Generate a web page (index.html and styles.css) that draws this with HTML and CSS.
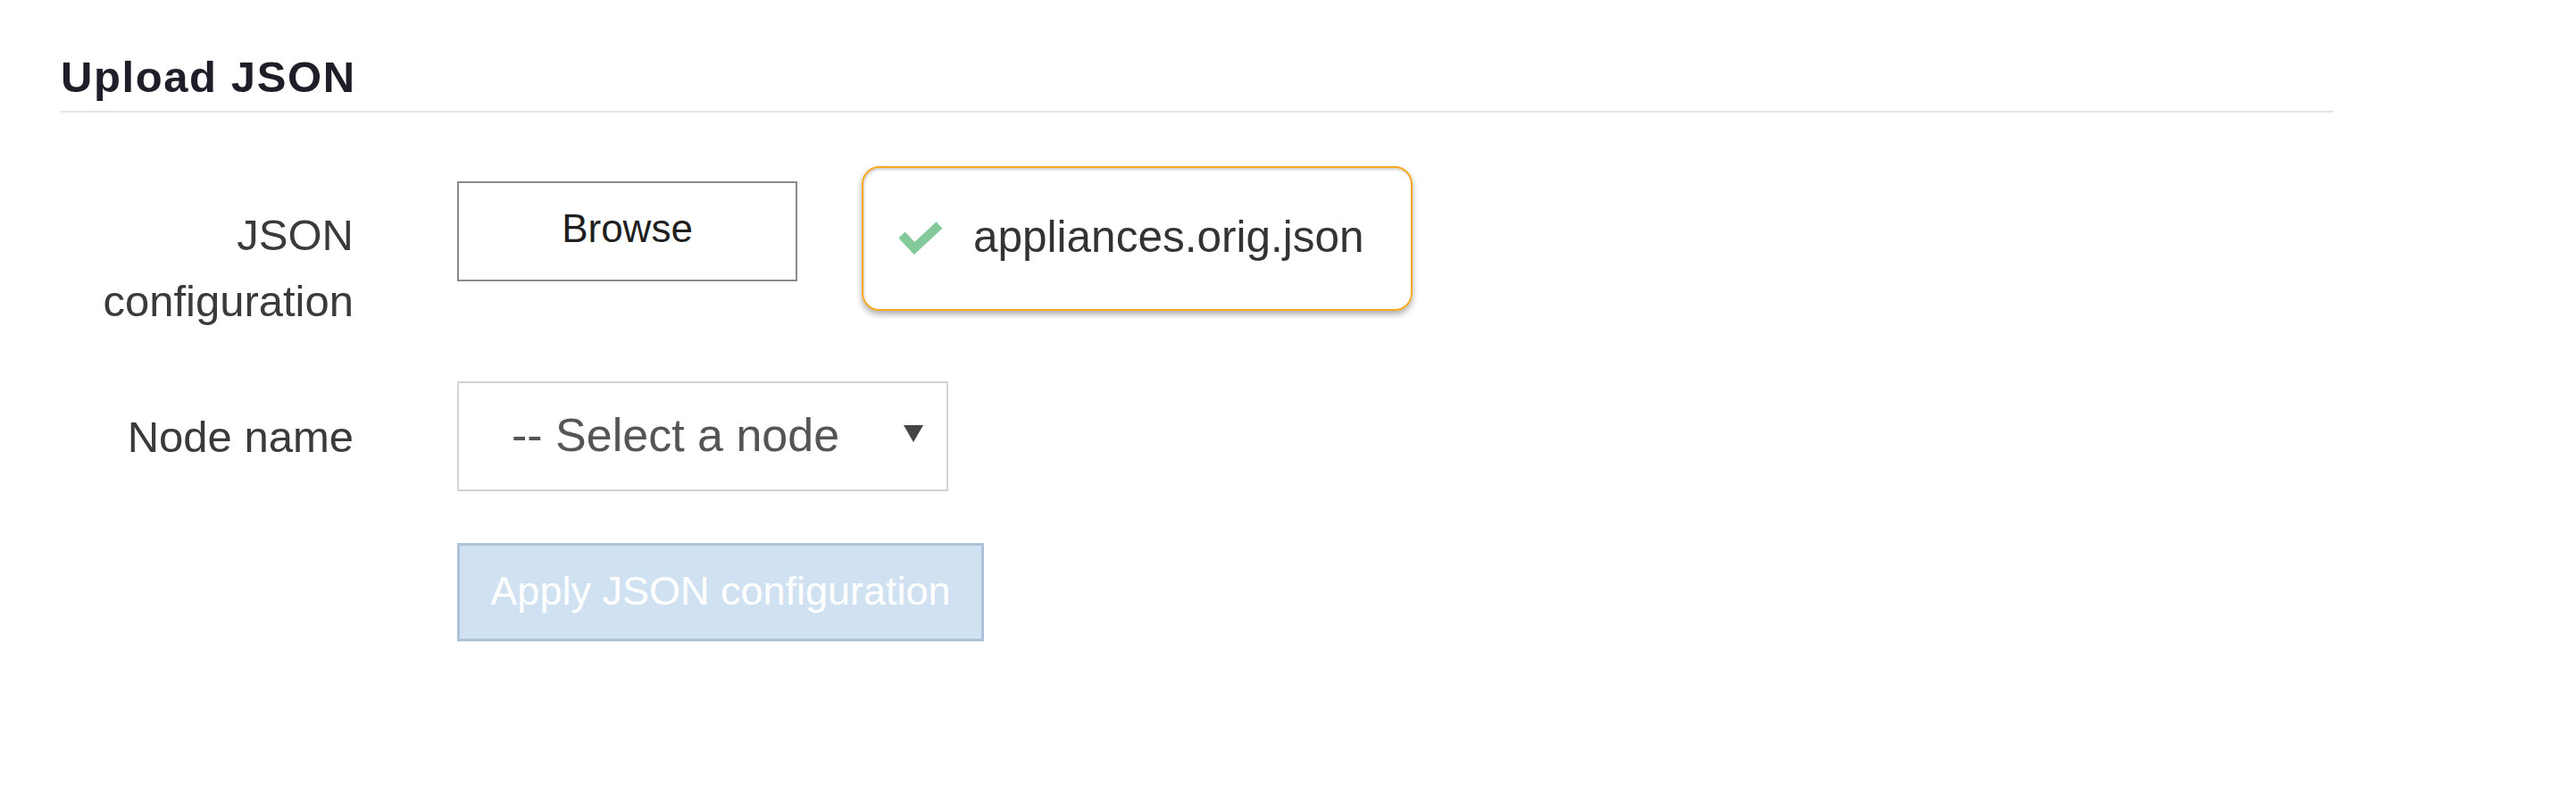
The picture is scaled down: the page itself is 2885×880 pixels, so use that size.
FILE: index.html
```html
<!DOCTYPE html>
<html lang="en">
<head>
<meta charset="utf-8">
<title>Upload JSON</title>
<link rel="stylesheet" href="styles.css">
</head>
<body>
<div class="page">
  <h2 class="section-title">Upload JSON</h2>
  <div class="form">
    <div class="row row-json">
      <label class="label label-json">JSON<br>configuration</label>
      <div class="controls controls-json">
        <button class="btn-browse" type="button">Browse</button>
        <div class="file-box">
          <svg class="check" width="52" height="40" viewBox="0 0 52 40">
            <polyline points="5,18 19,33 47,7" fill="none" stroke="#84c99a" stroke-width="10" stroke-linejoin="miter" stroke-linecap="butt"/>
          </svg>
          <span class="file-name">appliances.orig.json</span>
        </div>
      </div>
    </div>
    <div class="row row-node">
      <label class="label">Node name</label>
      <div class="select">
        <span class="select-text">-- Select a node</span>
        <span class="caret"></span>
      </div>
    </div>
    <div class="row row-apply">
      <button class="btn-apply" type="button" disabled>Apply JSON configuration</button>
    </div>
  </div>
</div>
</body>
</html>
```
FILE: styles.css
```css
html, body {
  margin: 0;
  padding: 0;
  background: #ffffff;
}

body {
  font-family: "Liberation Sans", Arial, sans-serif;
  color: #333333;
}

.page {
  width: 2545px;
  padding: 56px 0 0 68px;
}

.section-title {
  margin: 0;
  font-size: 49px;
  line-height: 60px;
  font-weight: bold;
  letter-spacing: 1.6px;
  color: #1e1e28;
  padding-bottom: 8px;
  border-bottom: 2px solid #e4e4e4;
}

.form {
  padding-top: 60px;
}

.row {
  display: flex;
  gap: 116px;
}

.label {
  width: 328px;
  flex: none;
  text-align: right;
  font-size: 49px;
  line-height: 74px;
  color: #3a3a3a;
}

.row-json {
  align-items: flex-start;
}

.label-json {
  margin-top: 40px;
}

.controls-json {
  display: flex;
  align-items: flex-start;
  gap: 72px;
}

.btn-browse {
  margin-top: 17px;
  width: 381px;
  height: 112px;
  border: 2px solid #8a8a8a;
  background: #ffffff;
  font-family: "Liberation Sans", Arial, sans-serif;
  font-size: 44px;
  color: #1f1f1f;
  padding: 0 0 6px 0;
  cursor: pointer;
}

.file-box {
  width: 617px;
  height: 162px;
  box-sizing: border-box;
  border: 2px solid #f6a81e;
  border-radius: 20px;
  box-shadow: 0 4px 7px rgba(0, 0, 0, 0.32), inset 1px 2px 3px rgba(0, 0, 0, 0.2);
  display: flex;
  align-items: center;
  padding-left: 38px;
  gap: 33px;
}

.check {
  flex: none;
  margin-bottom: 4px;
}

.file-name {
  font-size: 49.5px;
  color: #333333;
  padding-bottom: 6px;
}

.row-node {
  margin-top: 53px;
  align-items: center;
}

.select {
  width: 550px;
  height: 123px;
  box-sizing: border-box;
  border: 2px solid #d2d2d2;
  display: flex;
  align-items: center;
  justify-content: space-between;
  padding: 0 26px 0 59px;
}

.select-text {
  font-size: 52px;
  color: #555555;
  padding-bottom: 4px;
}

.caret {
  width: 0;
  height: 0;
  border-left: 11px solid transparent;
  border-right: 11px solid transparent;
  border-top: 19px solid #444444;
  margin-bottom: 6px;
}

.row-apply {
  margin-top: 58px;
  padding-left: 444px;
}

.btn-apply {
  width: 590px;
  height: 110px;
  box-sizing: border-box;
  background: #d0e2f2;
  border: 3px solid #abc2d8;
  color: #ffffff;
  font-family: "Liberation Sans", Arial, sans-serif;
  font-size: 45px;
  padding: 0 0 2px 0;
}
```
